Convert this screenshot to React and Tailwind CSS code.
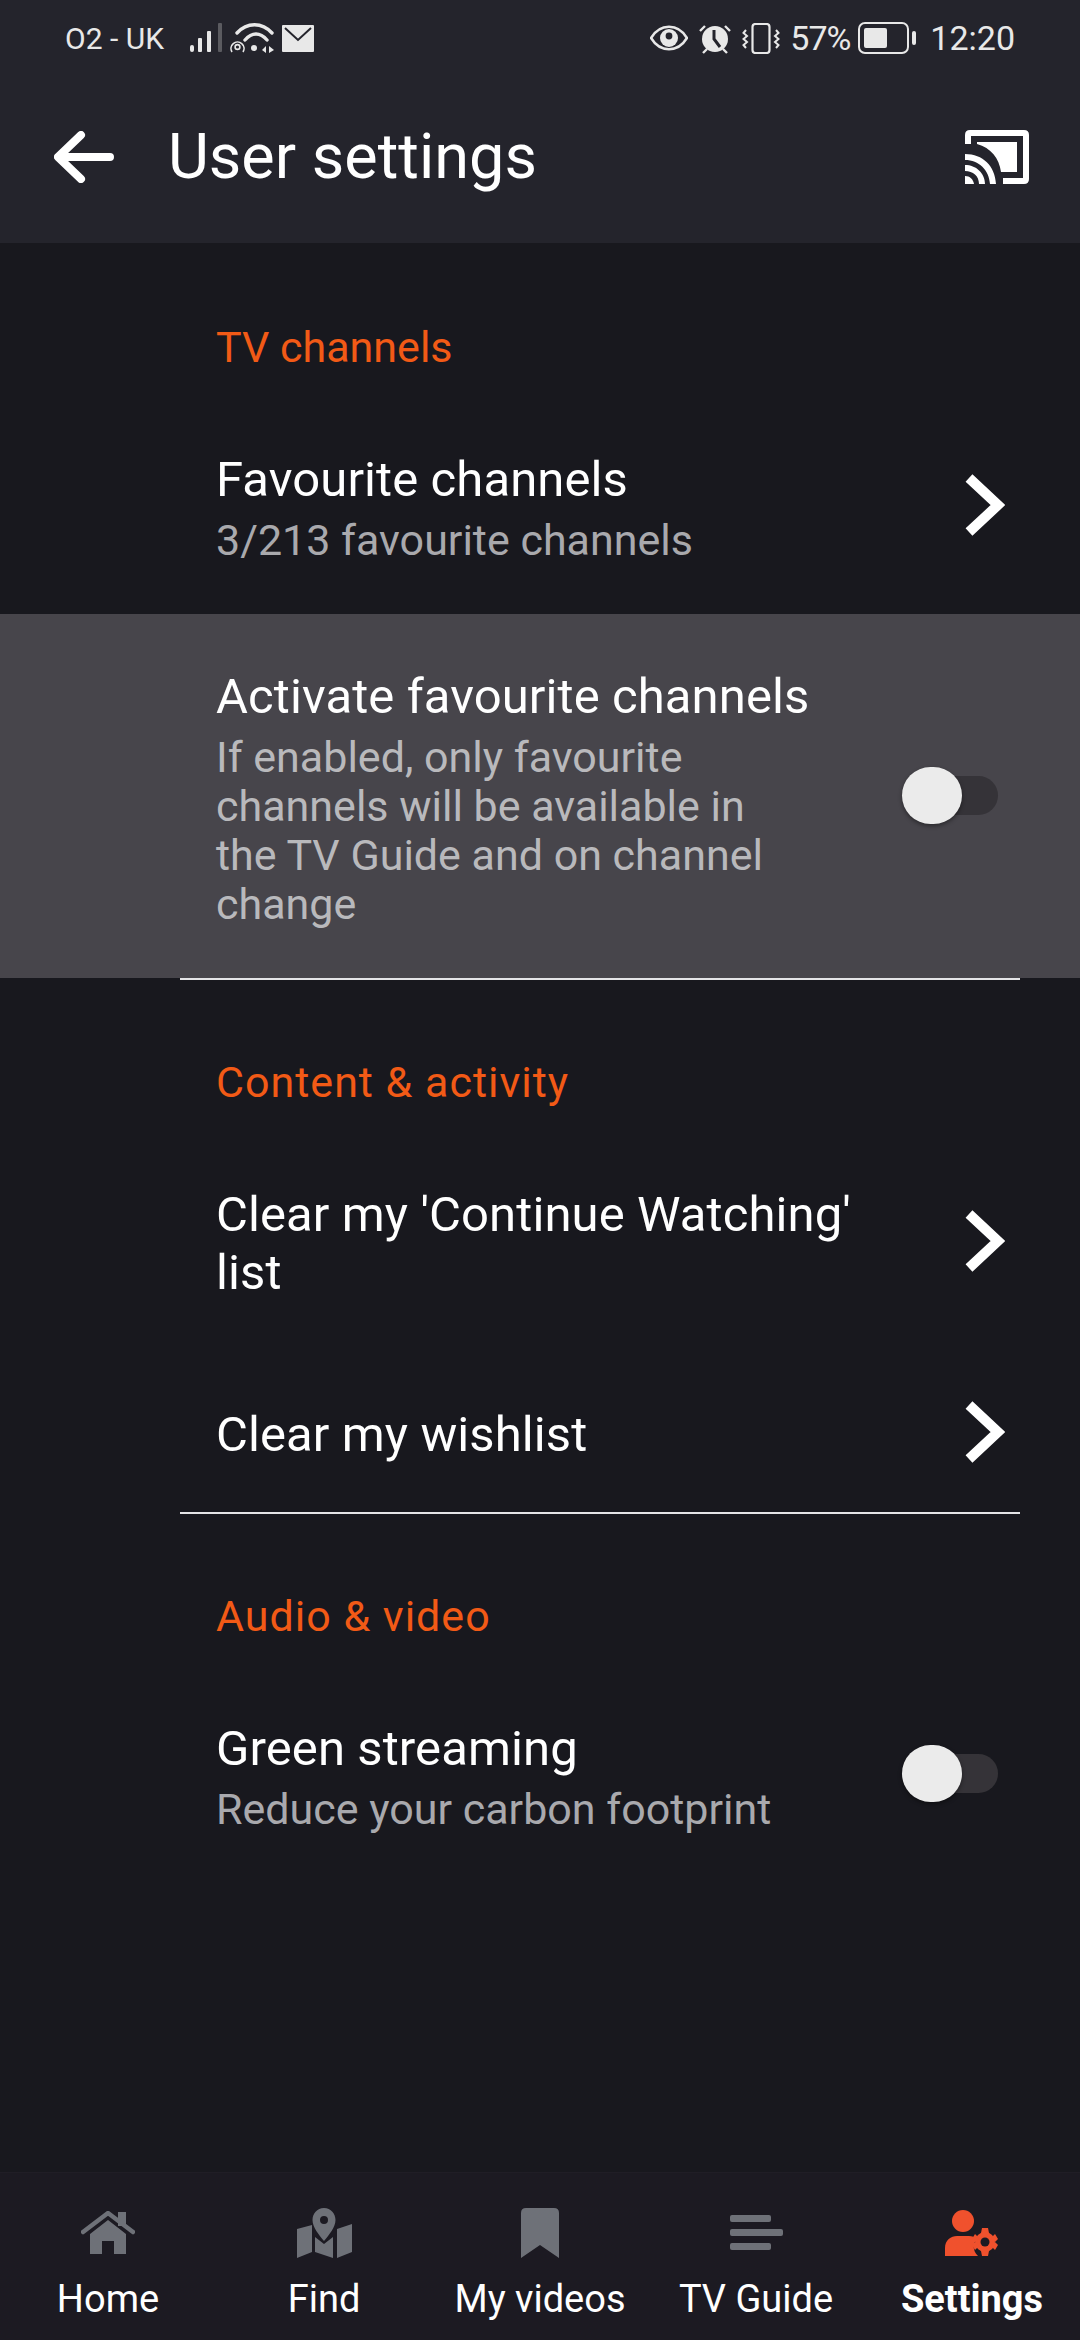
const font = "font-['Roboto',sans-serif]";

function StatusBar() {
  return (
    <div className="flex h-[76px] items-center justify-between pl-[65px] pr-[65px] text-[#e8e8e8]">
      <div className="flex items-center">
        <span className="w-[125px] text-[30px]">O2 - UK</span>
        <svg width="33" height="30" viewBox="0 0 33 30" className="mt-[-1px]">
          <rect x="0" y="22" width="4" height="7" rx="2" fill="#e8e8e8" />
          <rect x="8" y="15" width="4" height="14" rx="1" fill="#e8e8e8" />
          <rect x="17" y="8" width="4" height="21" rx="1" fill="#e8e8e8" />
          <rect x="28" y="0" width="4" height="29" rx="1" fill="#5b5b60" />
        </svg>
        <svg width="46" height="32" viewBox="0 0 46 32" className="ml-[7px]" fill="none" stroke="#e8e8e8">
          <path d="M7 11 C17 0 32 0 42 11" strokeWidth="3.4" strokeLinecap="round" />
          <path d="M15 18 C22 10 30 10 37 18" strokeWidth="3.4" strokeLinecap="round" />
          <circle cx="24" cy="26" r="3" fill="#e8e8e8" stroke="none" />
          <path d="M2 30 A6.5 6.5 0 1 1 13 30" strokeWidth="1.6" />
          <circle cx="7.5" cy="25" r="2.4" strokeWidth="1.6" />
          <path d="M36 24 L32 28 L36 31 Z M39 24 L44 28 L39 31 Z" fill="#e8e8e8" stroke="none" />
        </svg>
        <svg width="32" height="27" viewBox="0 0 32 27" className="ml-[6px]">
          <path d="M1 0 H31 Q32 0 32 1 V26 Q32 27 31 27 H1 Q0 27 0 26 V1 Q0 0 1 0 Z" fill="#e8e8e8" />
          <path d="M3 3 L16 15 L29 3" fill="none" stroke="#24242c" strokeWidth="2" />
        </svg>
      </div>
      <div className="flex items-center">
        <svg width="38" height="26" viewBox="0 0 38 26">
          <path d="M1 13 C10 -2 28 -2 37 13 C28 28 10 28 1 13 Z" fill="none" stroke="#e8e8e8" strokeWidth="2.6" />
          <circle cx="19" cy="13" r="9" fill="#e8e8e8" />
          <circle cx="19" cy="11" r="3.4" fill="#24242c" />
        </svg>
        <svg width="34" height="31" viewBox="0 0 32 31" className="ml-[10px]">
          <circle cx="16" cy="16" r="13" fill="#e8e8e8" />
          <path d="M15 7 V16 L21 24" fill="none" stroke="#24242c" strokeWidth="3" />
          <path d="M1 8 L6 3 M26 3 L31 8 M4 30 L8 26 M24 26 L28 30" stroke="#e8e8e8" strokeWidth="2.4" />
        </svg>
        <svg width="38" height="31" viewBox="0 0 38 31" className="ml-[10px]" fill="none" stroke="#e8e8e8">
          <rect x="10.5" y="1" width="17" height="29" rx="3" strokeWidth="2.2" />
          <path d="M4 7 L1.5 10 L5 13 L1.5 16 L5 19 L1.5 22 L4 25" strokeWidth="2" />
          <path d="M34 7 L36.5 10 L33 13 L36.5 16 L33 19 L36.5 22 L34 25" strokeWidth="2" />
        </svg>
        <span className="ml-[10px] w-[68px] text-[34px] tracking-[-1px]">57%</span>
        <svg width="58" height="32" viewBox="0 0 58 32" fill="none">
          <rect x="1" y="1" width="49" height="30" rx="6" stroke="#e8e8e8" strokeWidth="2" />
          <rect x="6" y="6" width="23" height="20" rx="2" fill="#e8e8e8" />
          <rect x="54" y="9" width="4" height="14" rx="2" fill="#e8e8e8" />
        </svg>
        <span className="ml-[14px] text-[34px]">12:20</span>
      </div>
    </div>
  );
}

function Toolbar() {
  return (
    <div className="flex h-[167px] items-center pb-[6px] pl-[54px] pr-[51px]">
      <svg width="60" height="52" viewBox="0 0 60 52" fill="none" stroke="#fff" strokeWidth="8" strokeLinecap="round" strokeLinejoin="round">
        <path d="M56 26 H6 M27 4 L4 26 L27 48" />
      </svg>
      <h1 className="ml-[54px] flex-1 text-[63px] leading-[70px] text-white">User settings</h1>
      <svg width="64" height="54" viewBox="0 0 64 54">
        <path d="M5 0 H59 Q64 0 64 5 V49 Q64 54 59 54 H38 V48 H58 V6 H6 V14 H0 V5 Q0 0 5 0 Z" fill="#fff" />
        <path d="M12 12 H52 V42 H36 C34 28 26 18 12 14 Z" fill="#fff" />
        <path d="M0 24 C18 24 30 36 31 54 H25 C24 40 14 30 0 30 Z" fill="#fff" />
        <path d="M0 35 C11 35 20 43 20 54 H14 C14 46 8 41 0 41 Z" fill="#fff" />
        <path d="M0 46 C5 46 8 49 9 54 H0 Z" fill="#fff" />
      </svg>
    </div>
  );
}

function Chevron() {
  return (
    <svg width="40" height="62" viewBox="0 0 40 62" fill="none" stroke="#fff" strokeWidth="10" strokeLinejoin="miter" className="mb-[6px] block shrink-0">
      <path d="M4 4 L33 31 L4 58" />
    </svg>
  );
}

function Toggle() {
  return (
    <div className="relative mb-[7px] h-[57px] w-[96px] shrink-0">
      <div className="absolute right-0 top-[9px] h-[39px] w-[70px] rounded-full bg-[#353338]" />
      <div className="absolute left-0 top-0 h-[57px] w-[60px] rounded-full bg-[#ebebeb] shadow-[0_2px_4px_rgba(0,0,0,0.4)]" />
    </div>
  );
}

function SectionLabel({ wide, children }) {
  return (
    <div className={`pl-[216px] text-[43px] leading-[40px] text-[#f25a16] ${wide ? "tracking-[1px]" : ""}`}>
      {children}
    </div>
  );
}

function Row({ title, sub, action, highlight, compact }) {
  return (
    <div
      className={`flex items-center pl-[216px] ${compact ? "pb-[43px] pt-[50px]" : "pb-[49px] pt-[54px]"} ${
        highlight ? "bg-[#47454b]" : ""
      }`}
    >
      <div className="w-[649px]">
        <div className="text-[49px] leading-[58px] tracking-[0.1px] text-white">{title}</div>
        {sub && (
          <div className={`mt-[7px] w-[570px] text-[43px] leading-[49px] ${highlight ? "text-[#b9b9bc]" : "text-[#a9a9ad]"}`}>
            {sub}
          </div>
        )}
      </div>
      <div className={action === "toggle" ? "ml-[37px]" : "ml-[100px]"}>
        {action === "toggle" ? <Toggle /> : <Chevron />}
      </div>
    </div>
  );
}

function Divider() {
  return <div className="ml-[180px] mr-[60px] h-[2px] bg-[#e4e4e6]" />;
}

function NavItem({ label, active, children }) {
  return (
    <div className="flex flex-1 flex-col items-center">
      <div className="flex h-[52px] items-center justify-center">{children}</div>
      <div className={`mt-[17px] text-[38px] leading-[46px] text-white ${active ? "font-bold" : ""}`}>{label}</div>
    </div>
  );
}

function BottomNav() {
  return (
    <nav className="flex h-[168px] border-t border-[#201e26] bg-[#1c1a22] pt-[34px]">
      <NavItem label="Home">
        <svg width="54" height="44" viewBox="0 0 54 44" fill="#6e7178">
          <path d="M2 21 L27 2 L52 21" fill="none" stroke="#6e7178" strokeWidth="4.5" strokeLinejoin="round" strokeLinecap="round" />
          <rect x="37" y="1" width="8" height="14" />
          <path d="M27 9 L45 23 V43 H33 V30 H21 V43 H9 V23 Z" />
        </svg>
      </NavItem>
      <NavItem label="Find">
        <svg width="55" height="50" viewBox="0 0 55 50" fill="#6e7178">
          <path d="M27 0 C20 0 15.5 6 15.5 12 C15.5 19 22 27 27 33 C32 27 38.5 19 38.5 12 C38.5 6 34 0 27 0 Z M27 8 A4 4 0 1 1 27 16 A4 4 0 1 1 27 8 Z" fillRule="evenodd" />
          <path d="M0 21 L15 17 V44 L0 50 Z" />
          <path d="M18 29 L27 36 L36 29 V50 L18 44 Z" />
          <path d="M40 21 L55 16 V44 L40 50 Z" />
        </svg>
      </NavItem>
      <NavItem label="My videos">
        <svg width="38" height="50" viewBox="0 0 38 50" fill="#6e7178">
          <path d="M5 0 H33 Q38 0 38 5 V50 L19 37 L0 50 V5 Q0 0 5 0 Z" />
        </svg>
      </NavItem>
      <NavItem label="TV Guide">
        <svg width="53" height="36" viewBox="0 0 53 36" fill="#6e7178">
          <rect x="0" y="0" width="41" height="7" rx="2" />
          <rect x="0" y="14" width="53" height="7" rx="2" />
          <rect x="0" y="28" width="41" height="7" rx="2" />
        </svg>
      </NavItem>
      <NavItem label="Settings" active>
        <svg width="54" height="46" viewBox="0 0 54 46" fill="#f0512d">
          <circle cx="18" cy="11" r="11" />
          <path d="M0 46 V38 C0 30 6 26 12 26 H24 C27 26 30 27 32 29 C28 33 27 40 33 46 Z" />
          <circle cx="40" cy="32" r="10" />
          <path d="M37 18 H43 L44 23 H36 Z M37 46 H43 L44 41 H36 Z M27 29 L30 24 L34 28 L31 33 Z M53 29 L50 24 L46 28 L49 33 Z M27 35 L30 40 L34 36 L31 31 Z M53 35 L50 40 L46 36 L49 31 Z" />
          <circle cx="40" cy="32" r="4.5" fill="#1c1a22" />
        </svg>
      </NavItem>
    </nav>
  );
}

export default function App() {
  return (
    <div className={`flex h-[2340px] w-[1080px] flex-col bg-[#18181e] ${font}`}>
      <header className="bg-[#24242c]">
        <StatusBar />
        <Toolbar />
      </header>
      <main className="flex-1">
        <div className="pt-[84px]">
          <SectionLabel>TV channels</SectionLabel>
          <div className="mt-[30px]" />
          <Row title="Favourite channels" sub="3/213 favourite channels" action="chevron" />
          <Row
            highlight
            title="Activate favourite channels"
            sub="If enabled, only favourite channels will be available in the TV Guide and on channel change"
            action="toggle"
          />
          <Divider />
        </div>
        <div className="pt-[82px]">
          <SectionLabel wide>Content &amp; activity</SectionLabel>
          <div className="mt-[30px]" />
          <Row title="Clear my 'Continue Watching' list" action="chevron" />
          <Row compact title="Clear my wishlist" action="chevron" />
          <Divider />
        </div>
        <div className="pt-[82px]">
          <SectionLabel wide>Audio &amp; video</SectionLabel>
          <div className="mt-[30px]" />
          <Row title="Green streaming" sub="Reduce your carbon footprint" action="toggle" />
        </div>
      </main>
      <BottomNav />
    </div>
  );
}
